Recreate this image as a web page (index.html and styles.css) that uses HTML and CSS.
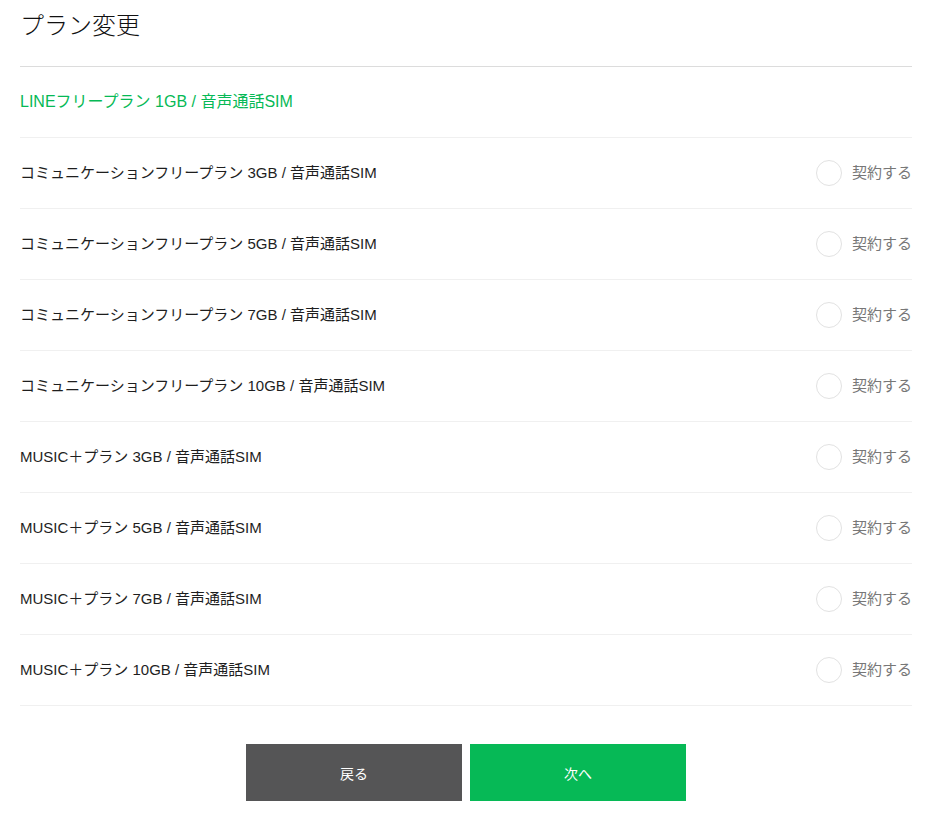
FILE: index.html
```html
<!DOCTYPE html>
<html lang="ja">
<head>
<meta charset="utf-8">
<link rel="stylesheet" href="styles.css">
</head>
<body>
<div class="page">
  <div class="header"><h1 class="title">プラン変更</h1></div>
  <ul class="plans">
    <li class="plan current"><span class="name">LINEフリープラン 1GB / 音声通話SIM</span></li>
    <li class="plan"><span class="name">コミュニケーションフリープラン 3GB / 音声通話SIM</span><label class="choice"><span class="radio"></span><span class="choice-text">契約する</span></label></li>
    <li class="plan"><span class="name">コミュニケーションフリープラン 5GB / 音声通話SIM</span><label class="choice"><span class="radio"></span><span class="choice-text">契約する</span></label></li>
    <li class="plan"><span class="name">コミュニケーションフリープラン 7GB / 音声通話SIM</span><label class="choice"><span class="radio"></span><span class="choice-text">契約する</span></label></li>
    <li class="plan"><span class="name">コミュニケーションフリープラン 10GB / 音声通話SIM</span><label class="choice"><span class="radio"></span><span class="choice-text">契約する</span></label></li>
    <li class="plan"><span class="name">MUSIC＋プラン 3GB / 音声通話SIM</span><label class="choice"><span class="radio"></span><span class="choice-text">契約する</span></label></li>
    <li class="plan"><span class="name">MUSIC＋プラン 5GB / 音声通話SIM</span><label class="choice"><span class="radio"></span><span class="choice-text">契約する</span></label></li>
    <li class="plan"><span class="name">MUSIC＋プラン 7GB / 音声通話SIM</span><label class="choice"><span class="radio"></span><span class="choice-text">契約する</span></label></li>
    <li class="plan"><span class="name">MUSIC＋プラン 10GB / 音声通話SIM</span><label class="choice"><span class="radio"></span><span class="choice-text">契約する</span></label></li>
  </ul>
  <div class="actions">
    <button class="btn back">戻る</button>
    <button class="btn next">次へ</button>
  </div>
</div>
</body>
</html>
```
FILE: styles.css
```css
* { box-sizing: border-box; }
body {
  margin: 0;
  background: #fff;
  font-family: "Liberation Sans", "Noto Sans CJK JP", sans-serif;
  color: #1e1e1e;
}
.page {
  width: 892px;
  margin-left: 20px;
}
.header {
  height: 67px;
  border-bottom: 1px solid #dcdcdc;
  display: flex;
  align-items: flex-start;
}
.title {
  margin: 10px 0 0;
  font-size: 24px;
  line-height: 32px;
  font-weight: 300;
  color: #111;
}
.plans {
  list-style: none;
  margin: 0;
  padding: 0;
}
.plan {
  height: 71px;
  border-bottom: 1px solid #f0f0f0;
  display: flex;
  align-items: center;
  justify-content: space-between;
  font-size: 15px;
  line-height: 20px;
}
.plan.current {
  color: #06b956;
  font-size: 16px;
}
.choice {
  display: flex;
  align-items: center;
  gap: 10px;
}
.radio {
  width: 26px;
  height: 26px;
  border: 1px solid #e2e2e2;
  border-radius: 50%;
  background: #fff;
}
.choice-text {
  color: #777;
  font-size: 15px;
}
.actions {
  display: flex;
  justify-content: center;
  gap: 8px;
  margin-top: 38px;
}
.btn {
  width: 216px;
  height: 57px;
  border: none;
  color: #fff;
  font-family: "Liberation Sans", "Noto Sans CJK JP", sans-serif;
  font-size: 14px;
  padding: 0;
}
.back { background: #555556; }
.next { background: #06b956; }
```
